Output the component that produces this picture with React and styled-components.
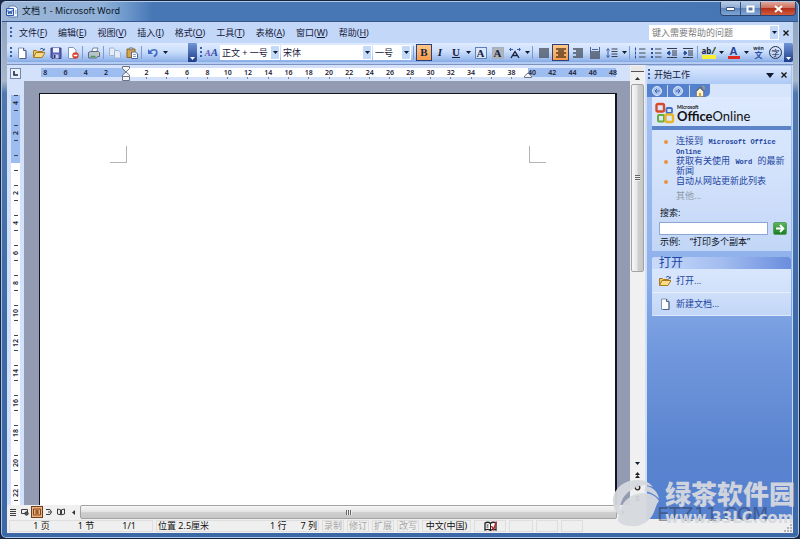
import React, { useState } from 'react';
import styled, { createGlobalStyle, css } from 'styled-components';

const GlobalStyle = createGlobalStyle`
  * {
    box-sizing: border-box;
  }

  body {
    margin: 0;
    font-family: 'Noto Sans', 'Noto Sans CJK SC', sans-serif;
    font-size: 9px;
    line-height: 12px;
    color: #16203a;
    background: #1a2a48;
  }

  button,
  input,
  select {
    margin: 0;
    padding: 0;
    border: 0;
    font: inherit;
    color: inherit;
    background: none;
  }

  ul {
    margin: 0;
    padding: 0;
    list-style: none;
  }

  svg {
    display: block;
    flex: none;
  }
`;

/* window */

const Window = styled.div`
  position: relative;
  display: flex;
  flex-direction: column;
  height: 100vh;
  padding: 0 6px 5px;
  overflow: hidden;
  border: 1px solid #14233f;
  border-radius: 6px;
  background: linear-gradient(180deg, #8aa0be 0, #a9b6c8 80px, #5079ae 92px, #3d69a6 60%, #3c68a8 100%);
  box-shadow: inset 0 0 0 1px #a9c4e4;
`;

const TitleBar = styled.header`
  display: flex;
  flex: none;
  align-items: flex-start;
  height: 21px;
  margin: 0 -5px;
  padding: 0 2px 0 4px;
  border-top: 1px solid #b5cbe6;
  border-bottom: 1px solid #35568c;
  border-radius: 5px 5px 0 0;
  background: linear-gradient(90deg, #9db6d6 0, #8fb0d8 100px, #6c97cb 125px, #4877b6 150px, #4676b4 100%);
`;

const Title = styled.h1`
  flex: 1;
  margin: 3px 0 0 4px;
  font-size: 9px;
  font-weight: 400;
  color: #0c1626;
`;

const AppIcon = styled.span`
  margin-top: 3px;
`;

const WindowButtons = styled.div`
  display: flex;
  overflow: hidden;
  border: 1px solid #2b4470;
  border-top: 0;
  border-radius: 0 0 4px 4px;
`;

const WindowButton = styled.button`
  display: flex;
  align-items: center;
  justify-content: center;
  width: ${({ $close }) => ($close ? '34px' : '20px')};
  height: 13px;
  border-right: ${({ $close }) => ($close ? 0 : '1px solid #34507f')};
  background: ${({ $close }) =>
    $close
      ? 'linear-gradient(180deg, #dfa79b 0, #cf6f5c 45%, #b5301b 50%, #cf5a3c 100%)'
      : 'linear-gradient(180deg, #b4c9e4 0, #8fadd4 45%, #5f86bb 50%, #7fa6d6 100%)'};
`;

/* menu and toolbars */

const MenuBar = styled.nav`
  display: flex;
  flex: none;
  align-items: center;
  height: 21px;
  padding-left: 2px;
  background: #c3d7f8;
`;

const Grip = styled.span`
  flex: none;
  width: 2px;
  height: 12px;
  margin: 0 1px;
  background: repeating-linear-gradient(180deg, #3d5fa8 0, #3d5fa8 2px, transparent 2px, transparent 4px);
`;

const MenuList = styled.div`
  display: flex;
  flex: 1;
  gap: 1px;
  margin-left: 1px;
`;

const MenuButton = styled.button`
  padding: 0 5px;
  white-space: nowrap;
`;

const HelpBox = styled.label`
  display: flex;
  width: 130px;
  height: 15px;
  background: #fff;

  input {
    flex: 1;
    min-width: 0;
    padding: 0 3px;
    outline: 0;
  }

  input::placeholder {
    color: #7a7a7a;
    opacity: 1;
  }
`;

const IconButton = styled.button`
  display: flex;
  flex: none;
  align-items: center;
  justify-content: center;
  width: 14px;
  height: 16px;
`;

const ToolbarRow = styled.div`
  display: flex;
  flex: none;
  height: 22px;
  padding-bottom: 2px;
  border-bottom: 1px solid #7d93bd;
  background: #b4ccf4;
`;

const Toolbar = styled.div`
  display: flex;
  flex: ${({ $grow }) => ($grow ? '1' : 'none')};
  align-items: center;
  width: ${({ $grow }) => ($grow ? 'auto' : '190px')};
  min-width: 0;
  padding-left: 2px;
  border-radius: 2px;
  background: linear-gradient(180deg, #dfebff 0, #cadefb 45%, #9dbdee 85%, #84a8e2 100%);
`;

const ToolButton = styled.button`
  display: flex;
  flex: none;
  align-items: center;
  justify-content: center;
  width: ${({ $size }) => ({ arrow: '8px', small: '16px' })[$size] || '17px'};
  height: 17px;
  ${({ $active }) =>
    $active &&
    css`
      border: 1px solid #2a3f7c;
      background: linear-gradient(180deg, #fdc888, #f59b49);
    `}
`;

const Divider = styled.span`
  flex: none;
  width: 1px;
  height: 13px;
  margin: 0 2px 0 1px;
  background: #7d9bd2;
`;

const ToolbarEnd = styled.button`
  display: flex;
  flex: none;
  align-items: flex-end;
  justify-content: center;
  align-self: stretch;
  width: 9px;
  margin-left: auto;
  padding-bottom: 2px;
  border-radius: 0 2px 2px 0;
  background: linear-gradient(180deg, #7295d6, #1d3d88);
`;

const Combo = styled.label`
  display: flex;
  flex: none;
  align-items: stretch;
  width: ${({ $width }) => $width}px;
  height: 15px;
  margin-right: 1px;
  background: #fff;

  select {
    flex: 1;
    min-width: 0;
    padding-left: 2px;
    appearance: none;
    outline: 0;
  }
`;

const ComboArrow = styled.span`
  display: flex;
  flex: none;
  align-items: center;
  justify-content: center;
  width: 10px;
  border: 1px solid #fff;
  background: #c3d9f8;
  pointer-events: none;
`;

/* document */

const Workspace = styled.main`
  display: flex;
  flex: 1;
  min-height: 0;
`;

const DocumentArea = styled.section`
  display: flex;
  flex: 1;
  flex-direction: column;
  min-width: 0;
  background: #d3e2fa;
`;

const DocumentRow = styled.div`
  display: flex;
  flex: 1;
  min-height: 0;
`;

const Editor = styled.div`
  display: flex;
  flex: 1;
  flex-direction: column;
  min-width: 0;
`;

const RulerRow = styled.div`
  display: flex;
  flex: none;
  height: 16px;
  padding: 3px 7px 0 0;
`;

const TabCorner = styled.button`
  display: flex;
  align-items: center;
  justify-content: center;
  width: 11px;
  height: 11px;
  margin: 0 14px 0 3px;
  border: 1px solid #7387ab;
  background: #e8f0fd;
`;

const HorizontalRuler = styled.div`
  display: flex;
  flex: 1;
  height: 9px;
  font-size: 7px;
  line-height: 9px;
  font-weight: 600;
  color: #1b2335;
  background: linear-gradient(
    90deg,
    transparent 1%,
    #9dbcf0 1%,
    #9dbcf0 15.5%,
    #fff 15.5%,
    #fff 83.9%,
    #9dbcf0 83.9%,
    #9dbcf0 98.8%,
    transparent 98.8%
  );
`;

const RulerMark = styled.span`
  position: relative;
  display: flex;
  flex: 1;
  flex-direction: column;
  align-items: center;
  min-width: 0;

  &::after {
    content: '';
    flex: none;
    width: 1px;
    height: 2px;
    background: ${({ $tick }) => ($tick ? '#7d8798' : 'transparent')};
  }
`;

const IndentMarker = styled.svg`
  position: absolute;
  top: -2px;
  left: ${({ $right }) => ($right ? '2px' : '6px')};
`;

const Canvas = styled.div`
  display: flex;
  flex: 1;
  min-height: 0;
  background: #939bb2;
`;

const VerticalRuler = styled.div`
  flex: none;
  width: 17px;
  padding: 7px 4px 0;
  overflow: hidden;
  background: #d3e2fa;
`;

const VerticalBand = styled.div`
  font-size: 7px;
  font-weight: 600;
  color: #1b2335;
  background: linear-gradient(180deg, transparent 7px, #9dbcf0 7px, #9dbcf0 75px, #fff 75px);
`;

const VerticalMark = styled.div`
  display: flex;
  align-items: center;
  justify-content: space-between;
  flex-direction: column;
  height: 30px;
  padding: 7px 0;

  &::before,
  &::after {
    content: '';
    flex: none;
    width: 4px;
    height: 1px;
    background: #3a455c;
  }

  span {
    line-height: 9px;
    writing-mode: vertical-rl;
    transform: rotate(180deg);
  }
`;

const Page = styled.article`
  display: flex;
  flex: 1;
  justify-content: space-between;
  margin: 12px 13px 0 15px;
  padding: 52px 69px 0 70px;
  border: solid #10151f;
  border-width: 1px 2px 0 1px;
  background: #fff;
`;

const MarginMark = styled.span`
  width: 17px;
  height: 17px;
  border: solid #b4b4b4;
  border-width: ${({ $right }) => ($right ? '0 0 1px 1px' : '0 1px 1px 0')};
`;

const VerticalScroll = styled.div`
  display: flex;
  flex: none;
  flex-direction: column;
  align-items: center;
  width: 15px;
  padding: 1px 1px 0;
  background: #f0f0f0;
`;

const SplitHandle = styled.span`
  align-self: stretch;
  height: 6px;
  border-bottom: 1px solid #555;
  background: #e8e8e8;
`;

const ScrollButton = styled.button`
  display: flex;
  flex: none;
  align-items: center;
  justify-content: center;
  width: 13px;
  height: 12px;
`;

const ScrollTrack = styled.div`
  display: flex;
  flex: 1;
  flex-direction: ${({ $vertical }) => ($vertical ? 'column' : 'row')};
  align-self: stretch;
  min-height: 0;
`;

const ScrollThumb = styled.div`
  display: flex;
  flex: ${({ $size }) => $size};
  align-items: center;
  justify-content: center;
  border: 1px solid #a3a3a3;
  border-radius: 2px;
  background: ${({ $vertical }) =>
    `linear-gradient(${$vertical ? '90deg' : '180deg'}, #f7f7f7 0, #e6e6e6 45%, #cfcfcf 55%, #c6c6c6 100%)`};
`;

const ThumbGrip = styled.span`
  width: ${({ $vertical }) => ($vertical ? '5px' : '6px')};
  height: ${({ $vertical }) => ($vertical ? '6px' : '5px')};
  background: ${({ $vertical }) =>
    `repeating-linear-gradient(${$vertical ? '180deg' : '90deg'}, #666 0, #666 1px, #eee 1px, #eee 2px)`};
`;

const HorizontalScroll = styled.div`
  display: flex;
  flex: none;
  align-items: center;
  height: 14px;
  padding-right: 15px;
  background: #f0f0f0;
`;

const ViewButton = styled.button`
  display: flex;
  align-items: center;
  justify-content: center;
  width: 12px;
  height: 12px;
  border: 1px solid ${({ $active }) => ($active ? '#6b3f1e' : 'transparent')};
  background: ${({ $active }) => ($active ? '#f2b27c' : 'none')};
`;

/* task pane */

const TaskPane = styled.aside`
  display: flex;
  flex: none;
  flex-direction: column;
  width: 148px;
  padding: 1px 1px 0 0;
  border-left: 2px solid #cfe0fb;
  border-right: 1px solid #c6dafa;
  background: linear-gradient(180deg, #a9c5f4 0, #8fb0ea 45%, #7299de 62%, #5a84cf 85%, #5580ce 100%);
`;

const PaneHeader = styled.div`
  display: flex;
  align-items: center;
  height: 18px;
  background: linear-gradient(180deg, #dbe8fe, #adc9f5);

  h2 {
    flex: 1;
    margin: 0 0 0 3px;
    font-size: 9px;
    font-weight: 400;
  }
`;

const PaneNavRow = styled.div`
  background: #d6e4fc;
`;

const PaneNav = styled.div`
  display: flex;
  align-items: center;
  width: 63px;
  height: 13px;
  border-radius: 0 0 5px 0;
  background: #5580cc;
`;

const NavButton = styled.button`
  display: flex;
  flex: 1;
  justify-content: center;

  & + & {
    border-left: 1px solid #c6d8f5;
  }
`;

const PaneCard = styled.section`
  margin-left: 5px;
  background: linear-gradient(180deg, #dce9fe 0, #d3e2fb 50%, #c2d6f7 100%);
`;

const OfficeLogo = styled.div`
  display: flex;
  align-items: center;
  gap: 2px;
  height: 33px;
  padding: 2px 3px 0;
  border-bottom: 4px solid #5b84c9;
`;

const LogoText = styled.div`
  padding-top: 2px;
  font-family: Lato, 'Open Sans', sans-serif;
  font-size: 13px;
  line-height: 12px;
  color: #111;
  white-space: nowrap;

  small {
    display: block;
    font-size: 5px;
    line-height: 5px;
    font-weight: 700;
  }

  b {
    font-weight: 700;
  }
`;

const LinkList = styled.ul`
  padding: 7px 0 0 24px;
  font-family: 'Liberation Mono', 'Noto Sans CJK SC', monospace;
  line-height: 10px;
`;

const LinkItem = styled.li`
  position: relative;

  &::before {
    content: '';
    position: absolute;
    top: 3px;
    left: -12px;
    width: 4px;
    height: 4px;
    border-radius: 50%;
    background: #e8943c;
  }
`;

const PaneLink = styled.a`
  color: ${({ $muted }) => ($muted ? '#8d97a8' : '#1d46a3')};
  text-decoration: none;

  small {
    font-size: 7px;
    line-height: 0;
    font-weight: 700;
  }
`;

const MoreLink = styled.div`
  padding: 4px 0 0 24px;
  line-height: 10px;
`;

const SearchForm = styled.form`
  padding: 5px 4px 2px 7px;

  label,
  p {
    display: block;
    margin: 0 0 0 1px;
    line-height: 14px;
    color: #0b1222;
  }

  label {
    padding-bottom: 2px;
  }
`;

const SearchRow = styled.div`
  display: flex;
  gap: 5px;

  input {
    flex: 1;
    min-width: 0;
    height: 13px;
    border: 1px solid #8ba6d2;
    background: #fff;
    outline: 0;
  }
`;

const GoButton = styled.button`
  display: flex;
  align-items: center;
  justify-content: center;
  width: 14px;
  height: 13px;
  border: 1px solid #5a9f62;
  border-radius: 2px;
  background: linear-gradient(180deg, #5cb45c, #1a7f26);
`;

const OpenCard = styled(PaneCard)`
  margin-top: 6px;
  border-bottom: 1px solid #dce9fe;
  border-radius: 3px 3px 0 0;
`;

const OpenTitle = styled.h2`
  margin: 0;
  padding-left: 7px;
  border-radius: 3px 3px 0 0;
  font-size: 12px;
  line-height: 12px;
  font-weight: 400;
  color: #1d46a3;
  background: linear-gradient(90deg, #c9dbfb 0, #a3bdf0 50%, #6a8ede 100%);
`;

const OpenItem = styled.a`
  display: flex;
  align-items: center;
  gap: 5px;
  height: 23px;
  padding-left: 7px;
  color: #1d46a3;
  text-decoration: none;

  & + & {
    border-top: 1px solid #e6effd;
  }
`;

/* status bar */

const StatusBar = styled.footer`
  display: flex;
  flex: none;
  align-items: center;
  height: 14px;
  padding-left: 2px;
  background: #efefef;
  white-space: nowrap;
  color: #111;
`;

const StatusCell = styled.span`
  display: flex;
  align-items: center;
  justify-content: ${({ $align }) => $align || 'center'};
  gap: ${({ $gap }) => $gap || 0}px;
  width: ${({ $width }) => $width}px;
  height: 12px;
  margin-right: 3px;
  padding: 0 ${({ $end }) => $end || 1}px 0 1px;
  border: 1px solid #dedede;
  color: ${({ $off }) => ($off ? '#a8a8a8' : 'inherit')};
`;

const SizeGrip = styled.svg`
  margin-left: auto;
  align-self: flex-end;
`;

const Watermark = styled.div`
  position: absolute;
  right: 0;
  bottom: 10px;
  display: flex;
  align-items: center;
  gap: 3px;
  color: #d6d9de;
  opacity: 0.94;
  pointer-events: none;
  white-space: nowrap;
`;

const WatermarkText = styled.div`
  position: relative;
  width: 134px;
  font-family: 'DejaVu Sans', 'Noto Sans CJK SC', sans-serif;
  font-weight: 700;

  strong {
    display: block;
    font-size: 26px;
    line-height: 30px;
  }

  span {
    display: block;
    font-size: 15px;
    line-height: 16px;
  }
`;

const WatermarkShade = styled.em`
  position: absolute;
  z-index: -1;
  top: 25px;
  left: -8px;
  font-size: 19px;
  line-height: 18px;
  font-style: normal;
  font-weight: 400;
  color: rgba(40, 50, 70, 0.5);
`;

/* icons */

const Icon = ({ size = 12, children }) => (
  <svg width={size} height={size} viewBox='0 0 12 12' fill='none' aria-hidden='true'>
    {children}
  </svg>
);

const Down = ({ color = '#101a30', size = 5 }) => (
  <svg width={size} height={size > 5 ? 5 : 3} viewBox='0 0 5 3' aria-hidden='true'>
    <path d='M0 0h5L2.500 3z' fill={color} />
  </svg>
);

const Cross = () => (
  <svg width='6' height='6' viewBox='0 0 6 6' aria-hidden='true'>
    <path d='M.5.5l5 5M5.500.5l-5 5' stroke='#111' strokeWidth='1.300' />
  </svg>
);

const NewDoc = () => (
  <Icon>
    <path d='M2.500 1h5l2.500 2.500V11.500h-7.500z' fill='#fff' stroke='#8296ba' />
    <path d='M7.500 1v2.500H10M10 4v7.500H4' stroke='#4b5f8a' />
  </Icon>
);

const Folder = () => (
  <Icon>
    <path d='M.5 10.500v-7h3l1 1h5v2' fill='#f2c65a' stroke='#a67a25' />
    <path d='M.5 10.500l2.500-5h9l-3 5z' fill='#fbdc85' stroke='#a67a25' />
    <path d='M7 2.500c1-1.500 3-1.500 4 .5M11.300 1.500V3.300H9.500' stroke='#3d5b9b' />
  </Icon>
);

const Save = () => (
  <Icon>
    <path d='M1 1h10v10.500H2L1 10.500z' fill='#5a63b8' stroke='#343c86' />
    <path d='M3 1h6v4.500H3z' fill='#eef2ff' />
    <path d='M3.500 7.500h5v4h-5z' fill='#c9cfe8' />
    <path d='M4 8h1.500v3H4z' fill='#30366f' />
  </Icon>
);

const Permission = () => (
  <Icon>
    <path d='M1.500.5h5l2.500 2.500v8.500H1.500z' fill='#fff' stroke='#8296ba' />
    <circle cx='8.500' cy='8.500' r='3.200' fill='#d8432c' />
    <path d='M6.700 8.500h3.600' stroke='#fff' strokeWidth='1.300' />
  </Icon>
);

const Print = () => (
  <Icon>
    <path d='M3.500 5L5 1h5L8.500 5' fill='#fff' stroke='#7387a8' />
    <path d='M.5 5.500l2-1h8l1 1v4h-2l-1 1.500H.5z' fill='#b9c3cf' stroke='#5c6a80' />
    <path d='M2.500 9.500h5' stroke='#4a9a55' strokeWidth='1.500' />
    <path d='M9 6.500h1.500' stroke='#e9c33c' />
  </Icon>
);

const Copy = () => (
  <Icon>
    <path d='M.5 1h4L6.500 3v5.500h-6z' fill='#e4ecf9' stroke='#a3b4d3' />
    <path d='M5.500 3.500h4L11.500 5.500v5.500h-6z' fill='#e4ecf9' stroke='#a3b4d3' />
  </Icon>
);

const Paste = () => (
  <Icon>
    <path d='M1 2h8v8.500H1z' fill='#d9a443' stroke='#8a6423' />
    <path d='M3.500.8h3v2h-3z' fill='#b5bccb' stroke='#646f84' strokeWidth='.7' />
    <path d='M5.500 5h4l2 2v4.500h-6z' fill='#fff' stroke='#51679b' />
    <path d='M7 7.500h3M7 9.500h3' stroke='#8ba0cb' />
  </Icon>
);

const Undo = () => (
  <Icon>
    <path d='M2.500 5.500C5 2 9.500 2 9.800 5c.2 2-1.300 3.800-3 4.500' stroke='#3e6bc4' strokeWidth='1.600' />
    <path d='M1 2v5h5z' fill='#3e6bc4' />
  </Icon>
);

const Glyph = styled.span`
  font-family: ${({ $sans }) => ($sans ? "'Liberation Sans', sans-serif" : "'Liberation Serif', serif")};
  font-size: ${({ $size }) => $size || 11}px;
  line-height: 11px;
  font-weight: 700;
  font-style: ${({ $italic }) => ($italic ? 'italic' : 'normal')};
  text-decoration: ${({ $under }) => ($under ? 'underline' : 'none')};
  color: ${({ $color }) => $color || '#18233f'};
`;

const BoxGlyph = styled(Glyph)`
  width: 12px;
  height: 12px;
  border: 1px solid ${({ $shade }) => ($shade ? '#a8b0be' : '#5f82b5')};
  line-height: 10px;
  text-align: center;
  background: ${({ $shade }) => ($shade ? '#b0b4bd' : '#d9e8fa')};
`;

const StylesIcon = () => (
  <div>
    <Glyph $italic $color='#6a52b0' $size={9}>A</Glyph>
    <Glyph $italic $color='#2e4da6' $size={11}>A</Glyph>
  </div>
);

const Lines = ({ rows, color = '#4a5262' }) => (
  <Icon>
    {rows.map(([x1, x2], index) => (
      <path key={index} d={`M${x1} ${index * 2 + 2}H${x2}`} stroke={color} strokeWidth='1.5' />
    ))}
  </Icon>
);

const justifyRows = [[1, 11], [1, 11], [1, 11], [1, 11], [1, 11]];
const centerRows = [[1, 11], [3, 9], [1, 11], [3, 9], [1, 11]];
const rightRows = [[1, 11], [4, 11], [1, 11], [4, 11], [1, 11]];

const Distribute = () => (
  <Icon>
    <path d='M1.500 0v5M10.500 0v5M3 2.500h6' stroke='#4b66a3' />
    <path d='M1 5h10M1 7h10M1 9h10M1 11h10' stroke='#4a5262' strokeWidth='1.500' />
  </Icon>
);

const LineSpacing = () => (
  <Icon>
    <path d='M2 2v8M.5 3.500L2 1.500l1.500 2M.5 8.500L2 10.500l1.500-2' stroke='#3658a8' />
    <path d='M5.500 2h6M5.500 4.500h6M5.500 7h6M5.500 9.500h6' stroke='#3a4256' />
  </Icon>
);

const ListIcon = ({ numbered }) => (
  <Icon>
    {[2, 6, 10].map((y) => (
      <g key={y}>
        {numbered ? (
          <path d={`M1.5 ${y - 1.5}v3`} stroke='#2b4fa5' />
        ) : (
          <path d={`M1 ${y}h2`} stroke='#2b4fa5' strokeWidth='2' />
        )}
        <path d={`M5 ${y}h6.500`} stroke='#414a5c' />
      </g>
    ))}
  </Icon>
);

const IndentIcon = ({ more }) => (
  <Icon>
    <path d='M1 1.500h10M6 4h5M6 6h5M6 8h5M1 10.500h10' stroke='#353d4e' strokeWidth='1.200' />
    <path d={more ? 'M1 6h3M2.500 4L5 6 2.500 8z' : 'M5 6H2M3.500 4L1 6l2.500 2z'} stroke='#2b4fa5' fill='#2b4fa5' />
  </Icon>
);

const HighlightIcon = styled.span`
  display: flex;
  width: 14px;
  height: 13px;
  border-bottom: 4px solid #f8ef35;
  font-size: 8px;
  line-height: 9px;
  font-weight: 700;
`;

const Pen = () => (
  <svg width='5' height='9' viewBox='0 0 5 9' aria-hidden='true'>
    <path d='M4.500 1L1 8' stroke='#4a5f38' strokeWidth='1.600' />
  </svg>
);

const CharScale = () => (
  <Icon>
    <path d='M2 11L6 4.500 10 11M3.500 8.500h5' stroke='#1c2640' strokeWidth='1.400' />
    <path d='M1 2.500h3M8 2.500h3M2 1L.5 2.500 2 4M10 1l1.500 1.500L10 4' stroke='#3358a8' />
  </Icon>
);

const FontColorIcon = styled.span`
  display: block;
  width: 12px;
  height: 13px;
  border-bottom: 3px solid #df2a22;
  text-align: center;
`;

const Pinyin = styled.span`
  font-size: 8px;
  line-height: 8px;
  font-weight: 700;
  color: #2c4ea6;

  small {
    display: block;
    font-size: 5px;
    line-height: 5px;
    color: #222c42;
  }
`;

const Enclosed = styled.span`
  display: block;
  width: 13px;
  height: 13px;
  border: 1px solid #26304a;
  border-radius: 50%;
  font-size: 8px;
  line-height: 11px;
  text-align: center;
`;

const WordIcon = () => (
  <svg width='12' height='13' viewBox='0 0 12 13' aria-hidden='true'>
    <path d='M3 1h6l2.500 2.500V12H3z' fill='#f4f8ff' stroke='#6280b5' />
    <path d='M.5 3.500h7v7h-7z' fill='#dfe9fb' stroke='#2f58a8' />
    <path d='M1.800 5l1 4L4 6l1.200 3 1-4' fill='none' stroke='#2b54a6' />
    <path d='M9 6h1.500M9 8h1.500' stroke='#6280b5' />
  </svg>
);

const OfficeMark = () => (
  <svg width='20' height='22' viewBox='0 0 20 22' fill='none' aria-hidden='true'>
    <rect x='1.500' y='2' width='7.500' height='7.500' rx='1.500' stroke='#d84a28' strokeWidth='2.400' />
    <rect x='11.500' y='6' width='5.500' height='5' rx='1' stroke='#3e6fc4' strokeWidth='1.800' />
    <rect x='3' y='13' width='6' height='6.500' rx='1' stroke='#6bab3a' strokeWidth='2' />
    <rect x='10.500' y='12.500' width='7.500' height='7.500' rx='1.500' stroke='#eab528' strokeWidth='2.400' />
  </svg>
);

const ArrowCircle = ({ left }) => (
  <Icon>
    <circle cx='6' cy='6' r='4.500' fill='#aac3ee' stroke='#dce8fb' />
    <path d={left ? 'M8.500 6h-4M6 4L4 6l2 2' : 'M3.500 6h4M6 4l2 2-2 2'} stroke='#3b62ad' />
  </Icon>
);

const Home = () => (
  <Icon>
    <path d='M1 7l5-5 5 5z' fill='#4a5468' />
    <path d='M2.500 6.500L6 3l3.500 3.500v5h-7z' fill='#fbf3d0' stroke='#6a6a60' strokeWidth='.6' />
    <path d='M5 8h2v3.500H5z' fill='#d9a53d' />
    <path d='M8.500 1.500h1.500v3' stroke='#e4a03a' />
  </Icon>
);

const ViewIcon = ({ kind }) => (
  <svg width='8' height='8' viewBox='0 0 8 8' fill='none' stroke='#3c3c3c' aria-hidden='true'>
    {kind === 'normal' && <path d='M1 1.500h6M1 3.500h6M1 5.500h6M1 7.500h6' strokeWidth='1.200' />}
    {kind === 'web' && (
      <>
        <path d='M.5 1.500h6v4h-6z' />
        <circle cx='5.500' cy='5.500' r='1.700' fill='#555' />
      </>
    )}
    {kind === 'print' && <path d='M.5 1h7v6h-7zM4 2v4M2 3h4M2 5h4' stroke='#7a431c' />}
    {kind === 'outline' && <path d='M1 1.500h4M3 4h3M1 6.500h4M5 1.500l1.500 2.500L5 6.500' />}
    {kind === 'reading' && <path d='M.5 1l3 .8v5l-3-.8zM7.500 1l-3 .8v5l3-.8z' />}
  </svg>
);

const Spelling = () => (
  <svg width='13' height='11' viewBox='0 0 13 11' fill='none' aria-hidden='true'>
    <path d='M1 2c2-1 4-1 5.500.5C8 1 10 1 12 2v7c-2-.8-4-.8-5.500.5C5 8.200 3 8.200 1 9z' fill='#fff' stroke='#222' strokeWidth='1.300' />
    <path d='M6.500 2.500v7M2.500 4h2M2.500 6h2' stroke='#222' />
    <path d='M7.500 5l2 3.500L12.500.5' stroke='#b3272d' strokeWidth='1.500' />
  </svg>
);

const WatermarkLogo = () => (
  <svg width='52' height='50' viewBox='0 0 52 50' fill='#d6d9de' aria-hidden='true'>
    <path d='M4 30C-1 14 12 1 29 2c6 0 11 3 14 7-7-3-15-2-20 2C14 16 9 23 10 38 7 36 5 33 4 30z' />
    <path d='M8 43c1-17 10-27 25-28 8 0 13 3 16 8-2 2-3 6-5 11-4 10-13 15-23 14-6 0-10-2-13-5z' />
    <path d='M36 8c7 1 12 6 13 13-3-4-8-7-15-8z' />
  </svg>
);

const menus = [
  ['文件', 'F'],
  ['编辑', 'E'],
  ['视图', 'V'],
  ['插入', 'I'],
  ['格式', 'O'],
  ['工具', 'T'],
  ['表格', 'A'],
  ['窗口', 'W'],
  ['帮助', 'H'],
];

const before = [8, 6, 4, 2];
const after = Array.from({ length: 24 }, (_, index) => (index + 1) * 2);
const verticalMarks = [4, 2, '', 2, 4, 6, 8, 10, 12, 14, 16, 18, 20, 22];
const views = [
  ['normal', '普通视图'],
  ['web', 'Web 版式视图'],
  ['print', '页面视图'],
  ['outline', '大纲视图'],
  ['reading', '阅读版式'],
];

const ToolArrow = ({ label }) => (
  <ToolButton $size='arrow' aria-label={label}>
    <Down />
  </ToolButton>
);

function StandardToolbar() {
  return (
    <Toolbar>
      <Grip />
      <ToolButton aria-label='新建'><NewDoc /></ToolButton>
      <ToolButton aria-label='打开'><Folder /></ToolButton>
      <ToolButton aria-label='保存'><Save /></ToolButton>
      <ToolButton aria-label='权限'><Permission /></ToolButton>
      <Divider />
      <ToolButton aria-label='打印'><Print /></ToolButton>
      <Divider />
      <ToolButton aria-label='复制'><Copy /></ToolButton>
      <ToolButton aria-label='粘贴'><Paste /></ToolButton>
      <Divider />
      <ToolButton aria-label='撤消'><Undo /></ToolButton>
      <ToolArrow label='撤消列表' />
      <ToolbarEnd aria-label='工具栏选项'><Down color='#fff' /></ToolbarEnd>
    </Toolbar>
  );
}

function FormatToolbar() {
  const [bold, setBold] = useState(true);
  const [align, setAlign] = useState('center');

  return (
    <Toolbar $grow>
      <Grip />
      <ToolButton aria-label='格式窗格'><StylesIcon /></ToolButton>
      <Combo $width={60}>
        <select aria-label='样式'><option>正文 + 一号</option></select>
        <ComboArrow><Down /></ComboArrow>
      </Combo>
      <Combo $width={91}>
        <select aria-label='字体'><option>宋体</option></select>
        <ComboArrow><Down /></ComboArrow>
      </Combo>
      <Combo $width={38}>
        <select aria-label='字号'><option>一号</option></select>
        <ComboArrow><Down /></ComboArrow>
      </Combo>
      <Divider />
      <ToolButton $size='small' $active={bold} onClick={() => setBold(!bold)}><Glyph>B</Glyph></ToolButton>
      <ToolButton $size='small'><Glyph $italic>I</Glyph></ToolButton>
      <ToolButton $size='small'><Glyph $under>U</Glyph></ToolButton>
      <ToolArrow label='下划线' />
      <ToolButton><BoxGlyph>A</BoxGlyph></ToolButton>
      <ToolButton><BoxGlyph $shade>A</BoxGlyph></ToolButton>
      <ToolButton aria-label='字符缩放'><CharScale /></ToolButton>
      <ToolArrow label='缩放比例' />
      <Divider />
      <ToolButton aria-label='两端对齐' $active={align === 'justify'} onClick={() => setAlign('justify')}>
        <Lines rows={justifyRows} />
      </ToolButton>
      <ToolButton aria-label='居中' $active={align === 'center'} onClick={() => setAlign('center')}>
        <Lines rows={centerRows} color='#5c3d20' />
      </ToolButton>
      <ToolButton aria-label='右对齐' $active={align === 'right'} onClick={() => setAlign('right')}>
        <Lines rows={rightRows} />
      </ToolButton>
      <ToolButton aria-label='分散对齐'><Distribute /></ToolButton>
      <ToolButton aria-label='行距'><LineSpacing /></ToolButton>
      <ToolArrow label='行距选项' />
      <Divider />
      <ToolButton $size='small' aria-label='编号'><ListIcon numbered /></ToolButton>
      <ToolButton $size='small' aria-label='项目符号'><ListIcon /></ToolButton>
      <ToolButton $size='small' aria-label='减少缩进量'><IndentIcon /></ToolButton>
      <ToolButton $size='small' aria-label='增加缩进量'><IndentIcon more /></ToolButton>
      <Divider />
      <ToolButton><HighlightIcon>ab<Pen /></HighlightIcon></ToolButton>
      <ToolArrow label='突出显示颜色' />
      <ToolButton>
        <FontColorIcon><Glyph $sans $color='#26459a'>A</Glyph></FontColorIcon>
      </ToolButton>
      <ToolArrow label='字体颜色' />
      <ToolButton><Pinyin><small>wén</small>文</Pinyin></ToolButton>
      <ToolButton><Enclosed>字</Enclosed></ToolButton>
      <ToolbarEnd aria-label='工具栏选项'><Down color='#fff' /></ToolbarEnd>
    </Toolbar>
  );
}

function Rulers() {
  return (
    <RulerRow>
      <TabCorner aria-label='制表符'>
        <svg width='5' height='5' viewBox='0 0 5 5'><path d='M1 0v4h4' fill='none' stroke='#1c2640' strokeWidth='1.600' /></svg>
      </TabCorner>
      <HorizontalRuler>
        {before.map((value) => <RulerMark key={value}>{value}</RulerMark>)}
        <RulerMark>
          <IndentMarker width='8' height='15' viewBox='0 0 8 15' fill='#f4f4f4' stroke='#6b7484'>
            <path d='M.5.5h7v2L4 6 .5 2.500zM4 6l3.500 3v1.500h-7V9zM.5 10.500h7v4h-7z' />
          </IndentMarker>
        </RulerMark>
        {after.map((value) => (
          <RulerMark key={value} $tick={value < 40}>
            {value === 40 && (
              <IndentMarker $right width='8' height='12' viewBox='0 0 8 12' fill='#f4f4f4' stroke='#6b7484'>
                <path d='M4 7l3.500 3v1.500h-7V10z' />
              </IndentMarker>
            )}
            {value}
          </RulerMark>
        ))}
      </HorizontalRuler>
    </RulerRow>
  );
}

function DocumentView() {
  const [view, setView] = useState('print');

  return (
    <DocumentArea>
      <DocumentRow>
        <Editor>
          <Rulers />
          <Canvas>
            <VerticalRuler>
              <VerticalBand>
                {verticalMarks.map((value, index) => (
                  <VerticalMark key={index}>
                    <span>{value}</span>
                  </VerticalMark>
                ))}
              </VerticalBand>
            </VerticalRuler>
            <Page>
              <MarginMark />
              <MarginMark $right />
            </Page>
          </Canvas>
        </Editor>
        <VerticalScroll>
          <SplitHandle />
          <ScrollButton aria-label='向上滚动'>
            <svg width='5' height='3' viewBox='0 0 5 3'><path d='M0 3h5L2.500 0z' fill='#333' /></svg>
          </ScrollButton>
          <ScrollTrack $vertical>
            <ScrollThumb $vertical $size={1}><ThumbGrip $vertical /></ScrollThumb>
            <ScrollTrack />
          </ScrollTrack>
          <ScrollButton aria-label='向下滚动'><Down /></ScrollButton>
          <ScrollButton aria-label='前一页'>
            <svg width='5' height='6' viewBox='0 0 5 6'><path d='M0 3h5L2.500 0zM0 6h5L2.500 3z' fill='#222' /></svg>
          </ScrollButton>
          <ScrollButton aria-label='选择浏览对象'>
            <svg width='7' height='7' viewBox='0 0 7 7'><circle cx='3.500' cy='3.500' r='2.300' fill='#ddd' stroke='#222' strokeWidth='1.300' /></svg>
          </ScrollButton>
          <ScrollButton aria-label='下一页'>
            <svg width='5' height='6' viewBox='0 0 5 6'><path d='M0 0h5L2.500 3zM0 3h5L2.500 6z' fill='#222' /></svg>
          </ScrollButton>
        </VerticalScroll>
      </DocumentRow>
      <HorizontalScroll>
        {views.map(([kind, label]) => (
          <ViewButton key={kind} aria-label={label} $active={view === kind} onClick={() => setView(kind)}>
            <ViewIcon kind={kind} />
          </ViewButton>
        ))}
        <ScrollButton aria-label='向左滚动'>
          <svg width='3' height='5' viewBox='0 0 3 5'><path d='M3 0v5L0 2.500z' fill='#333' /></svg>
        </ScrollButton>
        <ScrollTrack>
          <ScrollThumb $size={1}><ThumbGrip /></ScrollThumb>
        </ScrollTrack>
        <ScrollButton aria-label='向右滚动'>
          <svg width='3' height='5' viewBox='0 0 3 5'><path d='M0 0v5l3-2.500z' fill='#333' /></svg>
        </ScrollButton>
      </HorizontalScroll>
    </DocumentArea>
  );
}

function StartPane() {
  return (
    <TaskPane>
      <PaneHeader>
        <Grip />
        <h2>开始工作</h2>
        <IconButton aria-label='其他任务窗格'><Down size={8} /></IconButton>
        <IconButton aria-label='关闭任务窗格'><Cross /></IconButton>
      </PaneHeader>
      <PaneNavRow>
        <PaneNav>
          <NavButton aria-label='返回'><ArrowCircle left /></NavButton>
          <NavButton aria-label='前进'><ArrowCircle /></NavButton>
          <NavButton aria-label='主页'><Home /></NavButton>
        </PaneNav>
      </PaneNavRow>
      <PaneCard>
        <OfficeLogo>
          <OfficeMark />
          <LogoText>
            <small>Microsoft</small>
            <b>Office</b>Online
          </LogoText>
        </OfficeLogo>
        <LinkList>
          <LinkItem>
            <PaneLink href='#connect'>连接到 <small>Microsoft Office Online</small></PaneLink>
          </LinkItem>
          <LinkItem>
            <PaneLink href='#news'>获取有关使用 <small>Word</small> 的最新新闻</PaneLink>
          </LinkItem>
          <LinkItem>
            <PaneLink href='#update'>自动从网站更新此列表</PaneLink>
          </LinkItem>
        </LinkList>
        <MoreLink>
          <PaneLink $muted href='#more'>其他...</PaneLink>
        </MoreLink>
        <SearchForm onSubmit={(e) => e.preventDefault()}>
          <label htmlFor='search'>搜索:</label>
          <SearchRow>
            <input id='search' type='text' />
            <GoButton type='submit' aria-label='搜索'>
              <svg width='9' height='9' viewBox='0 0 9 9'><path d='M0 4.500h7M4 1l3.500 3.500L4 8' fill='none' stroke='#fff' strokeWidth='1.800' /></svg>
            </GoButton>
          </SearchRow>
          <p>示例:&nbsp;&nbsp;&nbsp; “打印多个副本”</p>
        </SearchForm>
      </PaneCard>
      <OpenCard>
        <OpenTitle>打开</OpenTitle>
        <OpenItem href='#open'><Folder />打开...</OpenItem>
        <OpenItem href='#new'><NewDoc />新建文档...</OpenItem>
      </OpenCard>
    </TaskPane>
  );
}

function App() {
  return (
    <>
      <GlobalStyle />
      <Window>
        <TitleBar>
          <AppIcon><WordIcon /></AppIcon>
          <Title>文档 1 - Microsoft Word</Title>
          <WindowButtons>
            <WindowButton aria-label='最小化'>
              <svg width='9' height='4' viewBox='0 0 9 4'><path d='M.5.5h8v3h-8z' fill='#fff' stroke='#41557b' /></svg>
            </WindowButton>
            <WindowButton aria-label='还原'>
              <svg width='9' height='8' viewBox='0 0 9 8'><path d='M1.500 1.500h6v5h-6z' fill='#5b78a8' stroke='#fff' strokeWidth='2' /></svg>
            </WindowButton>
            <WindowButton $close aria-label='关闭'>
              <svg width='9' height='8' viewBox='0 0 9 8'><path d='M1 1l7 6M8 1L1 7' stroke='#fff' strokeWidth='2' /></svg>
            </WindowButton>
          </WindowButtons>
        </TitleBar>
        <MenuBar>
          <Grip />
          <MenuList>
            {menus.map(([label, key]) => (
              <MenuButton key={key}>{label}(<u>{key}</u>)</MenuButton>
            ))}
          </MenuList>
          <HelpBox>
            <input type='text' aria-label='帮助' placeholder='键入需要帮助的问题' />
            <ComboArrow><Down /></ComboArrow>
          </HelpBox>
          <IconButton aria-label='关闭窗口'><Cross /></IconButton>
        </MenuBar>
        <ToolbarRow>
          <StandardToolbar />
          <FormatToolbar />
        </ToolbarRow>
        <Workspace>
          <DocumentView />
          <StartPane />
        </Workspace>
        <StatusBar>
          <StatusCell $width={144} $align='flex-end' $gap={28} $end={16}>
            <span>1 页</span>
            <span>1 节</span>
            <span>1/1</span>
          </StatusCell>
          <StatusCell $width={163} $align='space-between'>
            <span>位置 2.5厘米</span>
            <span>1 行&nbsp;&nbsp;&nbsp;&nbsp;&nbsp; 7 列</span>
          </StatusCell>
          <StatusCell $width={22} $off>录制</StatusCell>
          <StatusCell $width={22} $off>修订</StatusCell>
          <StatusCell $width={22} $off>扩展</StatusCell>
          <StatusCell $width={22} $off>改写</StatusCell>
          <StatusCell $width={49}>中文(中国)</StatusCell>
          <StatusCell $width={32}><Spelling /></StatusCell>
          <StatusCell $width={24} />
          <StatusCell $width={22} />
          <StatusCell $width={22} />
          <SizeGrip width='9' height='9' viewBox='0 0 9 9' fill='#b5b5b5'>
            <path d='M6 0h2v2H6zM3 3h2v2H3zM6 3h2v2H6zM0 6h2v2H0zM3 6h2v2H3zM6 6h2v2H6z' />
          </SizeGrip>
        </StatusBar>
        <Watermark>
          <WatermarkLogo />
          <WatermarkText>
            <WatermarkShade>ETZ11.COM</WatermarkShade>
            <strong>绿茶软件园</strong>
            <span>www.33LC.com</span>
          </WatermarkText>
        </Watermark>
      </Window>
    </>
  );
}

export default App;
